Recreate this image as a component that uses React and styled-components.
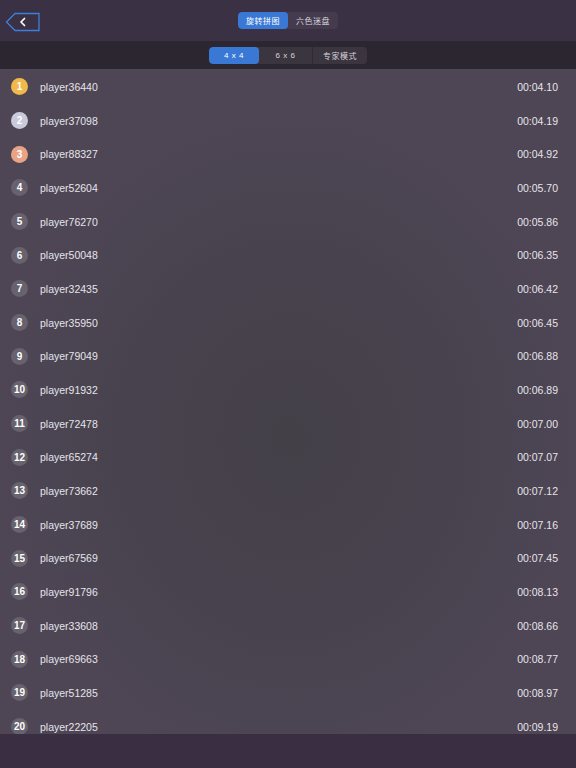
import React from 'react';
import styled, { createGlobalStyle } from 'styled-components';

const rows = [
	['player36440', '00:04.10'],
	['player37098', '00:04.19'],
	['player88327', '00:04.92'],
	['player52604', '00:05.70'],
	['player76270', '00:05.86'],
	['player50048', '00:06.35'],
	['player32435', '00:06.42'],
	['player35950', '00:06.45'],
	['player79049', '00:06.88'],
	['player91932', '00:06.89'],
	['player72478', '00:07.00'],
	['player65274', '00:07.07'],
	['player73662', '00:07.12'],
	['player37689', '00:07.16'],
	['player67569', '00:07.45'],
	['player91796', '00:08.13'],
	['player33608', '00:08.66'],
	['player69663', '00:08.77'],
	['player51285', '00:08.97'],
	['player22205', '00:09.19'],
];

const medal = ['#f1b84a', '#c9cadb', '#e9a385'];

function App() {
	return (
		<>
			<GlobalStyle />
			<Screen>
				<Header>
					<BackButton>
						<svg width="36" height="20" viewBox="0 0 36 20">
							<path
								d="M34 1.5 H10 L1.5 10 L10 18.5 H34 Z"
								fill="none"
								stroke="#3d7fdc"
								strokeWidth="1.3"
							/>
							<path
								d="M19.5 6.5 L16 10 L19.5 13.5"
								fill="none"
								stroke="#fff"
								strokeWidth="1.7"
								strokeLinecap="round"
								strokeLinejoin="round"
							/>
						</svg>
					</BackButton>
					<Segmented>
						<Seg $active $w={50}>旋转拼图</Seg>
						<Seg $w={50}>六色迷盘</Seg>
					</Segmented>
				</Header>
				<SubBar>
					<Segmented $dark>
						<Seg $active $w={50}>4 x 4</Seg>
						<Seg $w={53} $divider>6 x 6</Seg>
						<Seg $w={54}>专家模式</Seg>
					</Segmented>
				</SubBar>
				<List>
					{rows.map(([name, time], i) => (
						<Row key={name}>
							<Rank $color={medal[i]}>{i + 1}</Rank>
							<Name>{name}</Name>
							<Time>{time}</Time>
						</Row>
					))}
				</List>
				<Footer />
			</Screen>
		</>
	);
}

export default App;

const GlobalStyle = createGlobalStyle`
	body {
		margin: 0;
		background: #3a2f42;
		font-family: "Liberation Sans", "Noto Sans CJK SC", sans-serif;
	}
`;

const Screen = styled.div`
	display: flex;
	flex-flow: column;
	width: 576px;
	height: 768px;
	overflow: hidden;
`;

const Header = styled.div`
	position: relative;
	display: flex;
	justify-content: center;
	align-items: center;
	height: 41px;
	flex-shrink: 0;
	background: #3a3144;
`;

const BackButton = styled.div`
	position: absolute;
	left: 5px;
	top: 12px;
	display: flex;
`;

const Segmented = styled.div`
	display: flex;
	height: 17px;
	border-radius: 4px;
	overflow: hidden;
	background: ${(p) => (p.$dark ? '#3b3540' : '#443c4e')};
`;

const Seg = styled.div`
	display: flex;
	align-items: center;
	justify-content: center;
	width: ${(p) => p.$w}px;
	font-size: 8px;
	letter-spacing: 0.5px;
	color: ${(p) => (p.$active ? '#ffffff' : '#d8d4dc')};
	background: ${(p) => (p.$active ? '#3a78d6' : 'transparent')};
	border-radius: ${(p) => (p.$active ? '4px' : '0')};
	border-right: ${(p) => (p.$divider ? '1px solid #2f2a33' : 'none')};
`;

const SubBar = styled.div`
	display: flex;
	justify-content: center;
	align-items: center;
	height: 28px;
	flex-shrink: 0;
	background: #2b2630;
`;

const List = styled.div`
	height: 665px;
	flex-shrink: 0;
	overflow: hidden;
	padding-top: 1px;
	box-sizing: border-box;
	background: radial-gradient(
		ellipse 300px 340px at 290px 370px,
		#444048 0%,
		#48424e 55%,
		#4e4655 100%
	);
`;

const Row = styled.div`
	display: flex;
	align-items: center;
	height: 33.68px;
	padding: 0 18px 0 11px;
`;

const Rank = styled.div`
	display: flex;
	align-items: center;
	justify-content: center;
	width: 17px;
	height: 17px;
	border-radius: 50%;
	flex-shrink: 0;
	background: ${(p) => p.$color || '#67626d'};
	color: #fff;
	font-size: 10px;
	font-weight: bold;
`;

const Name = styled.div`
	flex: 1;
	margin-left: 12px;
	font-size: 10.5px;
	color: #e6e4ea;
`;

const Time = styled.div`
	font-size: 10.5px;
	color: #e6e4ea;
`;

const Footer = styled.div`
	flex: 1;
	background: #3a2f42;
`;
